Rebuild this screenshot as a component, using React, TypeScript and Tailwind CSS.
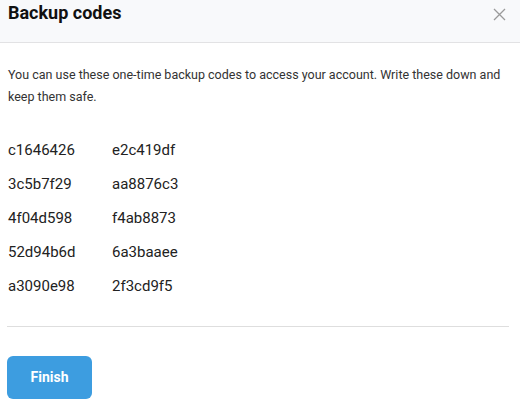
import React from "react";

const codes: [string, string][] = [
  ["c1646426", "e2c419df"],
  ["3c5b7f29", "aa8876c3"],
  ["4f04d598", "f4ab8873"],
  ["52d94b6d", "6a3baaee"],
  ["a3090e98", "2f3cd9f5"],
];

export default function App() {
  return (
    <div
      className="w-[520px] h-[406px] bg-white text-[#333] overflow-hidden"
      style={{ fontFamily: 'Roboto, "Noto Sans", sans-serif' }}
    >
      <header className="h-[43px] bg-[#f8f9fb] border-b border-[#e2e2e4] flex items-start justify-between pl-2 pr-[14px]">
        <h1 className="text-[18px] leading-6 font-bold text-[#111] pt-[1px]">Backup codes</h1>
        <button className="mt-[8px] text-[#9a9a9a]" aria-label="Close">
          <svg width="13" height="13" viewBox="0 0 13 13" fill="none" stroke="currentColor" strokeWidth="1.3">
            <path d="M1 1l11 11M12 1L1 12" />
          </svg>
        </button>
      </header>

      <div className="px-2">
        <p className="mt-[21px] text-[12.5px] leading-[22px] text-[#333]">
          You can use these one-time backup codes to access your account. Write these down and keep them safe.
        </p>

        <div className="mt-[25px] grid grid-cols-[104px_auto] text-[15px] leading-[34px] text-[#222]">
          {codes.map(([a, b]) => (
            <React.Fragment key={a}>
              <span>{a}</span>
              <span>{b}</span>
            </React.Fragment>
          ))}
        </div>
      </div>

      <div className="ml-[7px] w-[502px] mt-[23px] border-t border-[#dedede]" />

      <button className="ml-[7px] mt-[29px] w-[85px] h-[43px] rounded-[6px] bg-[#3d9de0] text-white text-[14px] font-bold">
        Finish
      </button>
    </div>
  );
}
